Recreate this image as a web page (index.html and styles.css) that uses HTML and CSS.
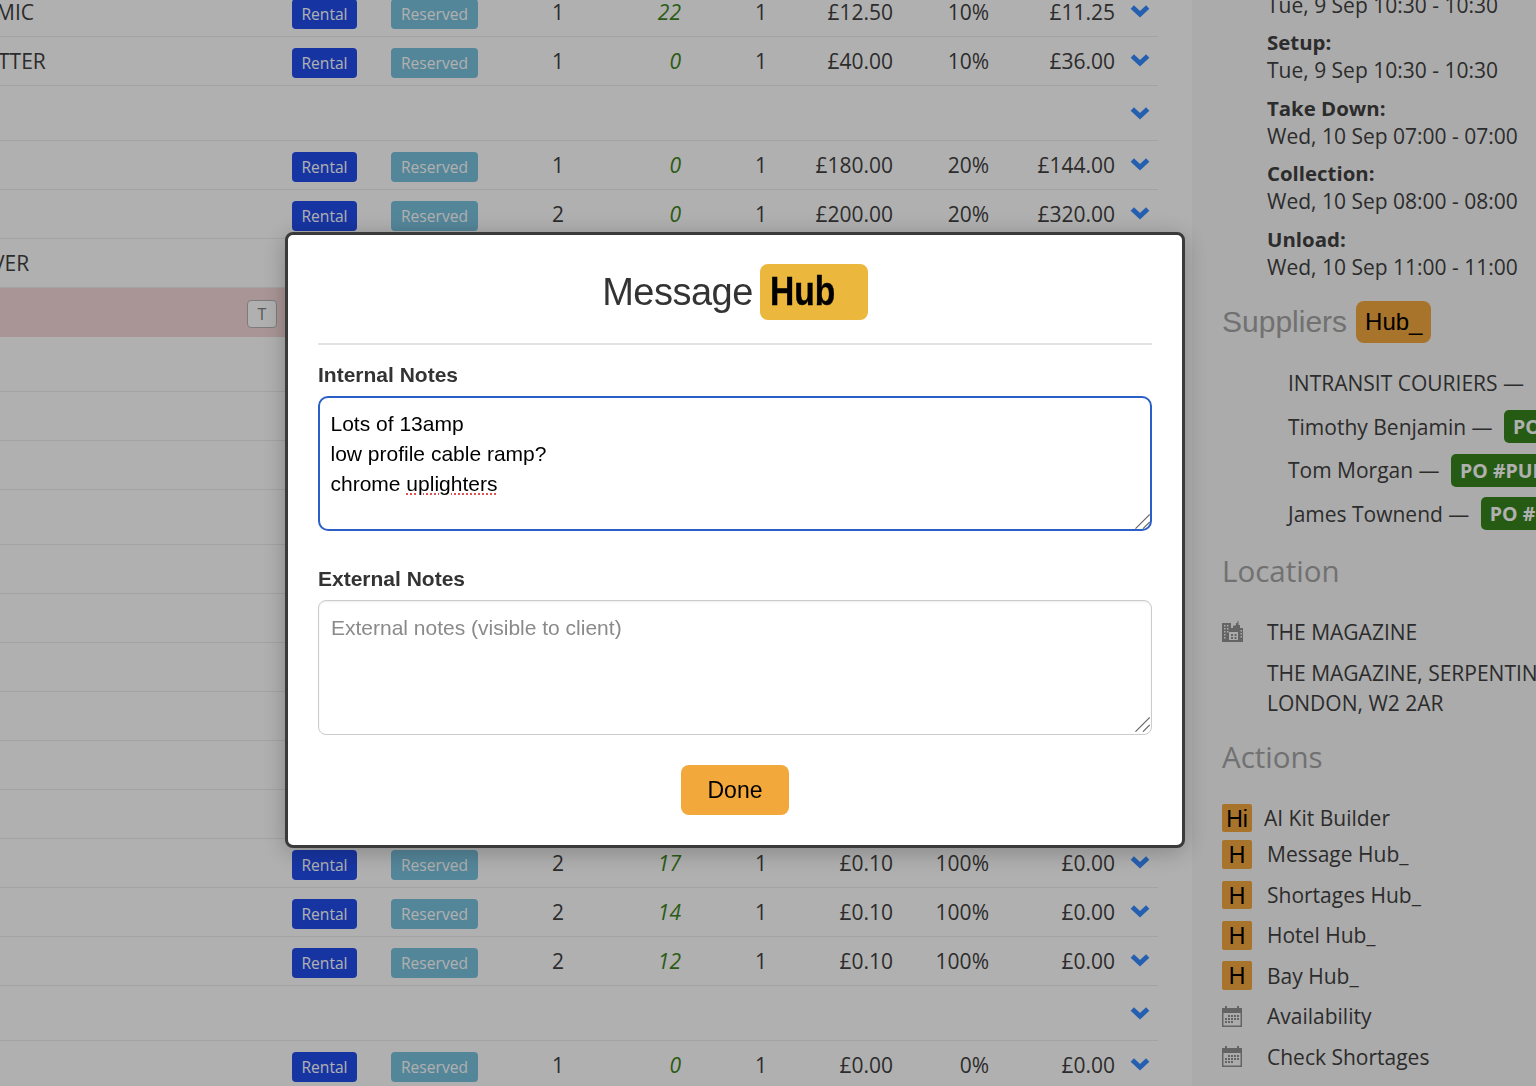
FILE: index.html
```html
<!DOCTYPE html>
<html lang="en">
<head>
<meta charset="utf-8">
<title>Message Hub</title>
<link rel="stylesheet" href="styles.css">
</head>
<body>
<svg class="defs" width="0" height="0" aria-hidden="true">
  <symbol id="chev" viewBox="0 0 20 14"><path d="M2.300 3 10 10.300 17.700 3" fill="none" stroke="currentColor" stroke-width="4.800"/></symbol>
  <symbol id="cal" viewBox="0 0 20 21"><path fill="currentColor" d="M0 2h3V0h2v2h10V0h2v2h3v19H0zM1.500 7v12.500h17V7z"/><path fill="currentColor" d="M6 9h2v2H6zM9 9h2v2H9zM12 9h2v2h-2zM15 9h2v2h-2zM3 12h2v2H3zM6 12h2v2H6zM9 12h2v2H9zM12 12h2v2h-2zM15 12h2v2h-2zM3 15h2v2H3zM6 15h2v2H6zM9 15h2v2H9z"/></symbol>
  <symbol id="grip" viewBox="0 0 15 15"><path d="M.5 14.700 14.700.5M8 14.700l6.700-6.700" fill="none" stroke="#666" stroke-width="1.100"/></symbol>
</svg>
<div class="page">
  <main class="table">
    <div class="row"><span class="name cut-m">MIC</span><span class="badge rental">Rental</span><span class="badge reserved">Reserved</span><span class="num qty">1</span><span class="num avail">22</span><span class="num unit">1</span><span class="num">£12.50</span><span class="num">10%</span><span class="num">£11.25</span><svg class="chev"><use href="#chev"/></svg></div>
    <div class="row"><span class="name cut-t">TTER</span><span class="badge rental">Rental</span><span class="badge reserved">Reserved</span><span class="num qty">1</span><span class="num avail">0</span><span class="num unit">1</span><span class="num">£40.00</span><span class="num">10%</span><span class="num">£36.00</span><svg class="chev"><use href="#chev"/></svg></div>
    <div class="row tall"><svg class="chev lone"><use href="#chev"/></svg></div>
    <div class="row"><span class="name"></span><span class="badge rental">Rental</span><span class="badge reserved">Reserved</span><span class="num qty">1</span><span class="num avail">0</span><span class="num unit">1</span><span class="num">£180.00</span><span class="num">20%</span><span class="num">£144.00</span><svg class="chev"><use href="#chev"/></svg></div>
    <div class="row"><span class="name"></span><span class="badge rental">Rental</span><span class="badge reserved">Reserved</span><span class="num qty">2</span><span class="num avail">0</span><span class="num unit">1</span><span class="num">£200.00</span><span class="num">20%</span><span class="num">£320.00</span><svg class="chev"><use href="#chev"/></svg></div>
    <div class="row"><span class="name cut-v">VER</span></div>
    <div class="row pink"><span class="tag">T</span></div>
    <div class="row tall"></div>
    <div class="row"></div>
    <div class="row"></div>
    <div class="row tall"></div>
    <div class="row"></div>
    <div class="row"></div>
    <div class="row"></div>
    <div class="row"></div>
    <div class="row"></div>
    <div class="row"></div>
    <div class="row"><span class="name"></span><span class="badge rental">Rental</span><span class="badge reserved">Reserved</span><span class="num qty">2</span><span class="num avail">17</span><span class="num unit">1</span><span class="num">£0.10</span><span class="num">100%</span><span class="num">£0.00</span><svg class="chev"><use href="#chev"/></svg></div>
    <div class="row"><span class="name"></span><span class="badge rental">Rental</span><span class="badge reserved">Reserved</span><span class="num qty">2</span><span class="num avail">14</span><span class="num unit">1</span><span class="num">£0.10</span><span class="num">100%</span><span class="num">£0.00</span><svg class="chev"><use href="#chev"/></svg></div>
    <div class="row"><span class="name"></span><span class="badge rental">Rental</span><span class="badge reserved">Reserved</span><span class="num qty">2</span><span class="num avail">12</span><span class="num unit">1</span><span class="num">£0.10</span><span class="num">100%</span><span class="num">£0.00</span><svg class="chev"><use href="#chev"/></svg></div>
    <div class="row tall"><svg class="chev lone"><use href="#chev"/></svg></div>
    <div class="row"><span class="name"></span><span class="badge rental">Rental</span><span class="badge reserved">Reserved</span><span class="num qty">1</span><span class="num avail">0</span><span class="num unit">1</span><span class="num">£0.00</span><span class="num">0%</span><span class="num">£0.00</span><svg class="chev"><use href="#chev"/></svg></div>
  </main>

  <aside class="side">
    <div class="when"><div>Tue, 9 Sep 10:30 - 10:30</div></div>
    <div class="when"><strong>Setup:</strong><div>Tue, 9 Sep 10:30 - 10:30</div></div>
    <div class="when"><strong>Take Down:</strong><div>Wed, 10 Sep 07:00 - 07:00</div></div>
    <div class="when"><strong>Collection:</strong><div>Wed, 10 Sep 08:00 - 08:00</div></div>
    <div class="when"><strong>Unload:</strong><div>Wed, 10 Sep 11:00 - 11:00</div></div>

    <div class="sup-head"><h2 class="arial-h">Suppliers</h2><span class="hub-pill">Hub_</span></div>
    <ul class="suppliers">
      <li>INTRANSIT COURIERS —<span class="po">PO #PUR</span></li>
      <li>Timothy Benjamin —<span class="po">PO #PUR</span></li>
      <li>Tom Morgan —<span class="po">PO #PUR</span></li>
      <li>James Townend —<span class="po">PO #PUR</span></li>
    </ul>

    <h2 class="loc-head">Location</h2>
    <div class="venue">
      <svg class="bld" viewBox="0 0 21 21" aria-hidden="true"><path fill="currentColor" fill-rule="evenodd" d="M0 2h9v5h2V5l3-1V2h1.500V0h1v4h1.500v3h3v14H0zM2 4v1.500h1.500V4zM5 4v1.500h1.500V4zM2 7v1.500h1.500V7zM5 7v1.500h1.500V7zM2 10v1.500h1.500V10zM5 10v1.500h1.500V10zM2 13v1.500h1.500V13zM2 16v1.500h1.500V16zM7 11v8h9v-8zM18.500 9v1.500H20V9zM18.500 12v1.500H20V12zM18.500 15v1.500H20V15zM9 13h2v2H9zM12.500 13h2v2h-2zM9 16h2v2H9zM12.500 16h2v2h-2z"/></svg>
      <span>THE MAGAZINE</span>
    </div>
    <div class="address">THE MAGAZINE, SERPENTINE<br>LONDON, W2 2AR</div>

    <h2 class="act-head">Actions</h2>
    <ul class="actions">
      <li class="ai"><span class="h">Hi</span><span>AI Kit Builder</span></li>
      <li><span class="h">H</span><span>Message Hub_</span></li>
      <li><span class="h">H</span><span>Shortages Hub_</span></li>
      <li><span class="h">H</span><span>Hotel Hub_</span></li>
      <li><span class="h">H</span><span>Bay Hub_</span></li>
      <li><svg class="cal"><use href="#cal"/></svg><span>Availability</span></li>
      <li><svg class="cal"><use href="#cal"/></svg><span>Check Shortages</span></li>
    </ul>
  </aside>
</div>

<div class="overlay">
  <section class="modal">
    <h1 class="title"><span class="title-text">Message</span><span class="hub"><span class="hub-text">Hub</span></span></h1>
    <hr class="rule">
    <label class="lbl">Internal Notes</label>
    <div class="area focus">Lots of 13amp<br>low profile cable ramp?<br>chrome <span class="spell">uplighters</span><svg class="grip"><use href="#grip"/></svg></div>
    <label class="lbl second">External Notes</label>
    <div class="area"><span class="ph">External notes (visible to client)</span><svg class="grip"><use href="#grip"/></svg></div>
    <div class="foot"><button class="done" type="button">Done</button></div>
  </section>
</div>
</body>
</html>
```
FILE: styles.css
```css
* { box-sizing: border-box; }
html, body { margin: 0; height: 1086px; overflow: hidden; background: #fff; }
body { font-family: "Open Sans", sans-serif; font-size: 21px; color: #414141; }
.defs { position: absolute; }
.page { display: flex; height: 1086px; overflow: hidden; }

.table { width: 1192px; flex: none; margin-top: -12px; padding-right: 34px; }
.row {
  display: grid;
  grid-template-columns: 292px 99px 87px 160px 83px 80px 92px 96px 126px 43px;
  align-items: center;
  height: 49px;
  border-bottom: 1px solid #ececec;
  line-height: 28px;
}
.row.tall { height: 55px; }
.row.pink { background: #f5d8d9; border-bottom-color: #f5d8d9; }
.name { white-space: nowrap; }
.cut-m { margin-left: -4px; }
.cut-t { margin-left: -2px; }
.cut-v { margin-left: -8px; }
.tag {
  grid-column: 1;
  justify-self: end;
  margin: 4px 15px 0 0;
  width: 30px; height: 28px;
  border: 1px solid #b4b4b4; border-radius: 4px;
  background: #fff; color: #808080;
  font-size: 16px; line-height: 26px; text-align: center;
}
.badge {
  justify-self: start;
  height: 30px; margin-top: 4px; border-radius: 4px;
  font-size: 15.600px; line-height: 30px; text-align: center; color: #fff;
}
.rental { width: 65px; background: #214dec; }
.reserved { width: 87px; background: #7ac2de; }
.num { text-align: right; }
.qty, .unit { text-align: center; }
.avail { font-style: italic; color: #3d8520; padding-right: 40px; }
.chev { width: 20px; height: 14px; margin-left: 14.500px; color: #368bff; margin-top: -2px; overflow: visible; }
.chev.lone { grid-column: 10; margin-top: 0; }

.side {
  width: 344px; flex: none;
  background: #f8f8f8;
  margin-top: -9.500px;
  padding-left: 30px;
  line-height: 28px;
  overflow: hidden;
}
.when { margin-left: 45px; margin-bottom: 9.670px; white-space: nowrap; }
.when strong { display: block; font-weight: 700; font-size: 20.400px; }
.sup-head { display: flex; align-items: center; height: 42px; margin-top: 20px; gap: 9px; }
h2 { margin: 0; font-weight: 400; color: #a4a4a4; }
.arial-h { font-family: "Liberation Sans", sans-serif; font-size: 30px; }
.hub-pill {
  height: 42px; padding: 0 9px; border-radius: 8px; background: #f3a73d; color: #000;
  font-family: "Liberation Sans", sans-serif; font-size: 24px; line-height: 42px;
}
.suppliers { list-style: none; margin: 26px 0 0 66px; padding: 0; display: flex; flex-direction: column; gap: 15.500px; white-space: nowrap; }
.suppliers li { height: 28px; display: flex; align-items: center; }
.po {
  display: inline-block; height: 33px; margin-left: 11.500px; padding: 0 9px; border-radius: 5px;
  background: #38851d; color: #fff; font-weight: 700; font-size: 19.500px; line-height: 33px;
}
.loc-head, .act-head { font-size: 29.500px; line-height: 40px; }
.loc-head { margin-top: 23px; }
.venue { display: flex; align-items: center; height: 28px; margin-top: 27px; gap: 24px; }
.bld { width: 21px; height: 21px; color: #919191; flex: none; }
.address { margin: 12px 0 0 45px; line-height: 30px; white-space: nowrap; }
.act-head { margin-top: 19px; }
.actions { list-style: none; margin: 27px 0 0; padding: 0; display: flex; flex-direction: column; gap: 11.800px; }
.actions li { display: flex; align-items: center; gap: 15px; height: 28.670px; }
.actions li.ai { gap: 12px; margin-bottom: -4px; }
.h {
  flex: none; width: 30px; height: 28.670px; border-radius: 2px; background: #f3a73d; color: #000;
  font-family: "Liberation Sans", sans-serif; font-size: 23px; line-height: 31px; text-align: center;
}
.cal { width: 20px; height: 21px; margin-right: 10px; color: #919191; flex: none; }

.overlay {
  position: fixed; inset: 0;
  background: rgba(0,0,0,.31);
  padding: 232px 351px 0 285px;
}
.modal {
  height: 616px; padding: 29px 30px 0 30px;
  background: #fff; border: 3px solid #3a3a3a; border-radius: 8px;
  box-shadow: 0 4px 24px rgba(0,0,0,.25);
  font-family: "Liberation Sans", sans-serif; color: #333;
}
.title { display: flex; justify-content: center; align-items: center; gap: 7px; height: 56px; margin: 0; font-weight: 400; font-size: 38px; letter-spacing: -.5px; }
.hub {
  width: 108px; height: 56px; padding-left: 10px; border-radius: 8px; background: #ecb73d; color: #000;
  font-weight: 700; font-size: 40px; line-height: 54px; letter-spacing: 0;
}
.hub-text { display: inline-block; transform: scaleX(.84); transform-origin: left; -webkit-text-stroke: .4px #000; }
.rule { border: 0; border-top: 2px solid #e2e2e2; margin: 23px 0 0; }
.lbl { display: block; margin-top: 17px; font-weight: 700; font-size: 21px; line-height: 26px; color: #333; }
.lbl.second { margin-top: 35px; }
.area {
  position: relative;
  height: 135px; margin-top: 8px; padding: 12px 12px;
  border: 1px solid #ccc; border-radius: 8px;
  box-shadow: inset 0 1px 2px rgba(0,0,0,.08);
  font-size: 21px; line-height: 30px; color: #000;
}
.area.focus { border: 2.500px solid #2b5fc7; padding: 10.500px 10.500px; box-shadow: none; border-radius: 10px; }
.grip { position: absolute; right: 1.500px; bottom: 2px; width: 15px; height: 15px; }
.focus .grip { right: 0; bottom: 0; }
.spell { text-decoration: underline dotted #e05050 2px; text-underline-offset: 3px; }
.ph { color: #8a8a8a; }
.foot { display: flex; justify-content: center; margin-top: 30px; }
.done {
  width: 108px; height: 50px; border: 0; border-radius: 8px; background: #f2a83b; color: #000;
  font-family: "Liberation Sans", sans-serif; font-size: 23px;
}
```
